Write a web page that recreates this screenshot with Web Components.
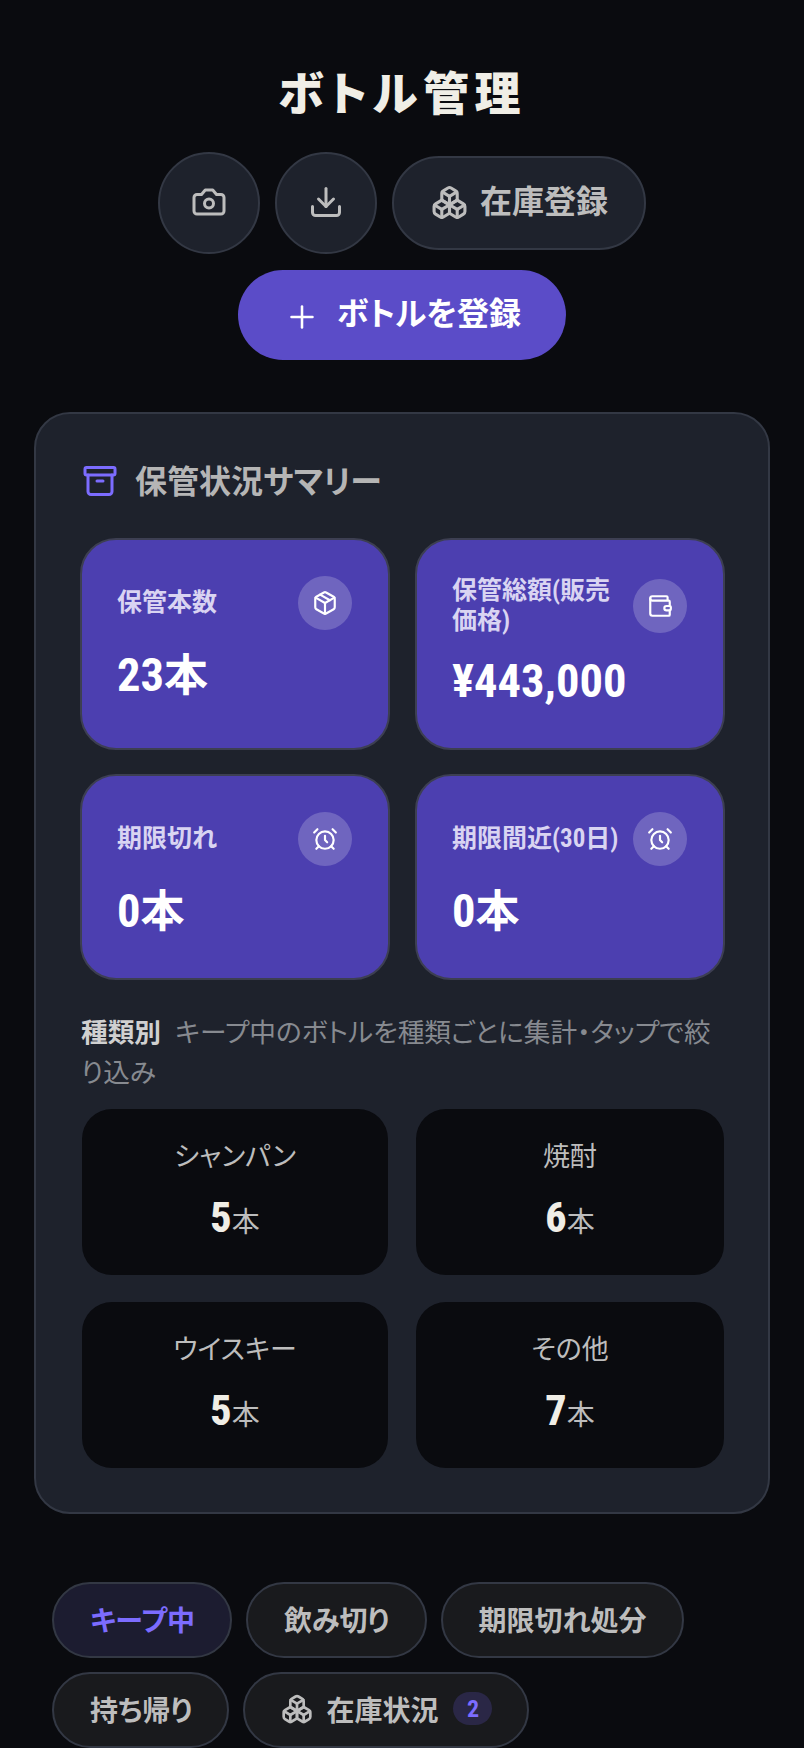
<!DOCTYPE html>
<html lang="ja"><head><meta charset="utf-8"><title>ボトル管理</title>
<style>
html,body{margin:0;background:#0a0b0f;height:1748px;overflow:hidden}
body{font-family:"Roboto","Noto Sans CJK JP",sans-serif;color:#f0eee6;font-feature-settings:"palt";font-stretch:75%}
</style></head><body>
<bottle-page>
  <page-header slot="header"></page-header>
  <summary-card slot="summary">
    <stat-grid>
      <stat-card label="保管本数" value="23" unit="本" icon="package"></stat-card>
      <stat-card label="保管総額(販売価格)" value="¥443,000" icon="wallet"></stat-card>
      <stat-card label="期限切れ" value="0" unit="本" icon="alarm"></stat-card>
      <stat-card label="期限間近(30日)" value="0" unit="本" icon="alarm"></stat-card>
    </stat-grid>
    <kind-section>
      <kind-card label="シャンパン" count="5"></kind-card>
      <kind-card label="焼酎" count="6"></kind-card>
      <kind-card label="ウイスキー" count="5"></kind-card>
      <kind-card label="その他" count="7"></kind-card>
    </kind-section>
  </summary-card>
  <tab-bar slot="tabs">
    <tab-pill active>キープ中</tab-pill>
    <tab-pill>飲み切り</tab-pill>
    <tab-pill>期限切れ処分</tab-pill>
    <tab-pill>持ち帰り</tab-pill>
    <tab-pill icon="boxes" badge="2">在庫状況</tab-pill>
  </tab-bar>
</bottle-page>
<script>
const ICONS={
camera:'<path d="M14.5 4h-5L7 7H4a2 2 0 0 0-2 2v9a2 2 0 0 0 2 2h16a2 2 0 0 0 2-2V9a2 2 0 0 0-2-2h-3l-2.5-3z"/><circle cx="12" cy="13" r="3"/>',
download:'<path d="M21 15v4a2 2 0 0 1-2 2H5a2 2 0 0 1-2-2v-4"/><polyline points="7 10 12 15 17 10"/><line x1="12" x2="12" y1="15" y2="3"/>',
boxes:'<path d="M2.97 12.92A2 2 0 0 0 2 14.63v3.24a2 2 0 0 0 .97 1.71l3 1.8a2 2 0 0 0 2.06 0L12 19v-5.5l-5-3-4.03 2.42Z"/><path d="m7 16.5-4.74-2.85"/><path d="m7 16.5 5-3"/><path d="M7 16.5v5.17"/><path d="M12 13.5V19l3.97 2.38a2 2 0 0 0 2.06 0l3-1.8a2 2 0 0 0 .97-1.71v-3.24a2 2 0 0 0-.97-1.71L17 10.5l-5 3Z"/><path d="m17 16.5-5-3"/><path d="m17 16.5 4.74-2.85"/><path d="M17 16.5v5.17"/><path d="M7.97 4.42A2 2 0 0 0 7 6.13v4.37l5 3 5-3V6.13a2 2 0 0 0-.97-1.71l-3-1.8a2 2 0 0 0-2.06 0l-3 1.8Z"/><path d="M12 8 7.26 5.15"/><path d="m12 8 4.74-2.85"/><path d="M12 13.5V8"/>',
plus:'<path d="M5 12h14"/><path d="M12 5v14"/>',
archive:'<rect width="20" height="5" x="2" y="3" rx="1"/><path d="M4 8v11a2 2 0 0 0 2 2h12a2 2 0 0 0 2-2V8"/><path d="M10 12h4"/>',
package:'<path d="m7.5 4.27 9 5.15"/><path d="M21 8a2 2 0 0 0-1-1.73l-7-4a2 2 0 0 0-2 0l-7 4A2 2 0 0 0 3 8v8a2 2 0 0 0 1 1.73l7 4a2 2 0 0 0 2 0l7-4A2 2 0 0 0 21 16Z"/><path d="m3.3 7 8.7 5 8.7-5"/><path d="M12 22V12"/>',
wallet:'<path d="M19 7V4a1 1 0 0 0-1-1H5a2 2 0 0 0 0 4h15a1 1 0 0 1 1 1v4h-3a2 2 0 0 0 0 4h3a1 1 0 0 0 1-1v-2a1 1 0 0 0-1-1"/><path d="M3 5v14a2 2 0 0 0 2 2h15a1 1 0 0 0 1-1v-4"/>',
alarm:'<circle cx="12" cy="13" r="8"/><path d="M12 9v4l2 2"/><path d="M5 3 2 6"/><path d="m22 6-3-3"/><path d="M6.38 18.7 4 21"/><path d="M17.64 18.67 20 21"/>'
};
function def(name,css,html){
  customElements.define(name,class extends HTMLElement{
    constructor(){super();this.attachShadow({mode:'open'});}
    connectedCallback(){
      this.shadowRoot.innerHTML='<style>'+css+'</style>'+(typeof html==='function'?html(this):html);
    }
  });
}
const attr=(e,n)=>e.getAttribute(n)||'';
def('app-icon',':host{display:inline-flex;width:var(--s,32px);height:var(--s,32px);flex:none}svg{width:100%;height:100%;display:block;fill:none;stroke:currentColor;stroke-width:var(--sw,2);stroke-linecap:round;stroke-linejoin:round}',
  e=>`<svg viewBox="0 0 24 24" aria-hidden="true">${ICONS[attr(e,'name')]||''}</svg>`);
def('bottle-page',':host{display:flex;flex-direction:column}',
  '<slot name="header"></slot><slot name="summary"></slot><slot name="tabs"></slot>');
def('round-button',`:host{display:inline-flex;align-items:center;justify-content:center;box-sizing:border-box;width:102px;height:102px;padding-bottom:2px;border-radius:50%;background:#1e222c;border:2px solid #333844;color:#bdbdbd;--s:36px;--sw:2}`,
  e=>`<app-icon name="${attr(e,'icon')}"></app-icon>`);
def('pill-button',`:host{display:inline-flex;align-items:center;box-sizing:border-box;border-radius:999px;font-size:var(--fs);font-weight:var(--fw);}
  :host([kind=ghost]){--fs:32px;--fw:600;height:94px;padding:0 36px 8px 37px;gap:12px;background:#1e222c;border:2px solid #333844;color:#bdbdbd;--s:37px}
  :host([kind=ghost]) app-icon{top:3px}
  :host([kind=primary]){--fs:32px;--fw:700;height:90px;padding:0 45px 8px 46px;gap:17px;background:#5b4cc8;color:#fff;--s:36px;--sw:1.7}
  :host([kind=primary]) app-icon{top:6px}
  app-icon{position:relative}`,
  e=>`<app-icon name="${attr(e,'icon')}"></app-icon><span><slot></slot></span>`);
def('page-header',`:host{display:flex;flex-direction:column;align-items:center;padding-top:65px;height:348px;box-sizing:border-box}
  h1{margin:0;font-size:46px;line-height:58px;font-weight:900;letter-spacing:5.5px;color:#f0eee6}
  .row{display:flex;align-items:center;gap:15px;margin-top:29px;}
  .row2{margin-top:16px}`,
  `<h1>ボトル管理</h1><div class="row"><round-button icon="camera"></round-button><round-button icon="download"></round-button><pill-button kind="ghost" icon="boxes">在庫登録</pill-button></div><div class="row2"><pill-button kind="primary" icon="plus">ボトルを登録</pill-button></div>`);
def('summary-card',`:host{display:block;box-sizing:border-box;margin:64px 34px 0;width:736px;height:1102px;background:#1e222c;border:2px solid #333844;border-radius:36px;padding:37px 43px 44px 45px}
  header{display:flex;align-items:center;gap:17px;height:56px;margin-bottom:31px;color:#b5b5b5;font-size:32px;font-weight:700;--s:36px;padding-left:1px}
  app-icon{color:#7c6cff;position:relative;top:2px}`,
  `<header><app-icon name="archive"></app-icon><span>保管状況サマリー</span></header><slot></slot>`);
def('stat-grid',':host{display:grid;grid-template-columns:310px 310px;gap:24px 25px;margin-left:-1px}','<slot></slot>');
def('stat-card',`:host{display:flex;flex-direction:column;box-sizing:border-box;border:2px solid #3d3f52;border-radius:36px;background:#4c3fb0;padding:36px 36px 38px 35px;color:#fff}
  .top{display:flex;align-items:center;justify-content:space-between;gap:12px;min-height:54px}
  .label{font-size:25px;line-height:30px;font-weight:700;color:#d9d4f2}
  .ic{flex:none;width:54px;height:54px;border-radius:50%;background:rgba(255,255,255,.2);display:flex;align-items:center;justify-content:center;--s:26px;color:#fff}
  .value{font-size:46.5px;line-height:56px;font-weight:700;margin-top:17px}
  .value span{font-size:44px}`,
  e=>`<div class="top"><div class="label">${attr(e,'label')}</div><div class="ic"><app-icon name="${attr(e,'icon')}"></app-icon></div></div><div class="value">${attr(e,'value')}<span>${attr(e,'unit')}</span></div>`);
def('kind-section',`:host{display:block;margin-top:33px;padding:0 1px}
  p{margin:0 0 16px -1px;font-size:26.7px;line-height:40px;color:#878a90}
  b{font-weight:700;color:#d0d0d0;margin-right:14px}
  .grid{display:grid;grid-template-columns:306px 308px;gap:27px 28px}`,
  `<p><b>種類別</b>キープ中のボトルを種類ごとに集計・タップで絞り込み</p><div class="grid"><slot></slot></div>`);
def('kind-card',`:host{display:flex;flex-direction:column;align-items:center;box-sizing:border-box;height:166px;border-radius:30px;background:#0a0b0f;padding-top:30px;color:#bdbdbd}
  .l{font-size:27px;line-height:36px}
  .v{margin-top:17px;line-height:52px;font-size:28px;color:#bdbdbd}
  .v b{font-size:42px;font-weight:800;color:#f0eee6}`,
  e=>`<div class="l">${attr(e,'label')}</div><div class="v"><b>${attr(e,'count')}</b>本</div>`);
def('tab-bar',':host{display:flex;flex-wrap:wrap;gap:14px;margin:68px 52px 0}','<slot></slot>');
def('tab-pill',`:host{display:inline-flex;align-items:center;box-sizing:border-box;height:76px;padding:0 35px 3px 36px;border-radius:38px;border:2px solid #333844;background:#191a1d;color:#bdbdbd;font-size:28px;font-weight:600;gap:13px;--s:32px}
  :host([active]){background:#1c1c30;color:#7c6cff}
  .b{display:inline-flex;align-items:center;justify-content:center;min-width:39px;height:33px;border-radius:17px;background:#2a2746;color:#7c6cff;font-size:24px;font-weight:700;margin-left:2px}`,
  e=>`${e.hasAttribute('icon')?`<app-icon name="${attr(e,'icon')}"></app-icon>`:''}<span><slot></slot></span>${e.hasAttribute('badge')?`<span class="b">${attr(e,'badge')}</span>`:''}`);
</script>
</body></html>
